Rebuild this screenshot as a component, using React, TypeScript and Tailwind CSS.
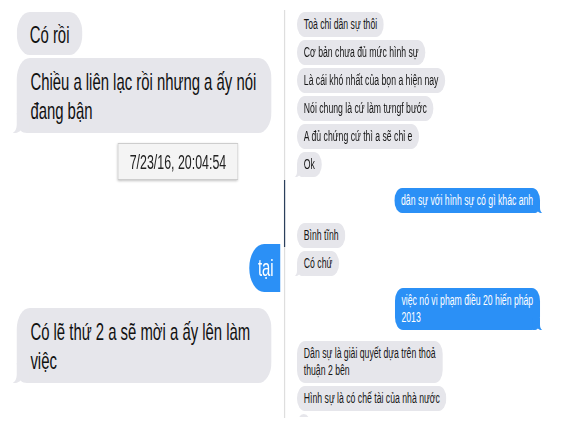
import React from 'react';

// the whole capture is squeezed horizontally, so the page is laid out wide and scaled on x
const Tail: React.FC<{ side: 'left' | 'right'; blue?: boolean; small?: boolean }> = ({ side, blue, small }) => {
  const pos = small
    ? side === 'left'
      ? 'left-[-4px] w-[16px] h-[12px]'
      : 'right-[-4px] w-[16px] h-[12px] -scale-x-100'
    : side === 'left'
      ? 'left-[-7px] w-[28px] h-[20px]'
      : 'right-[-7px] w-[28px] h-[20px] -scale-x-100';
  return (
    <svg
      viewBox="0 0 28 20"
      preserveAspectRatio="none"
      className={`absolute bottom-0 ${pos} ${blue ? 'fill-[#2b90f6]' : 'fill-[#e6e6eb]'}`}
    >
      <path d="M7 0 V12 C7 16 4 19 0 20 C5 20.5 10 19.5 13 17.5 C16 19.3 19 20 24 20 H28 V0 Z" />
    </svg>
  );
};

const Small: React.FC<{ children?: React.ReactNode; tail?: boolean; className?: string }> = ({ children, tail, className }) => (
  <div className={`relative w-fit shrink-0 rounded-[13px] bg-[#e6e6eb] px-[11px] py-[4px] text-[14px] leading-[17px] text-[#161616] ${className ?? ''}`}>
    {children}
    {tail && <Tail side="left" small />}
  </div>
);

const SmallBlue: React.FC<{ children: React.ReactNode; className?: string }> = ({ children, className }) => (
  <div className={`relative w-fit shrink-0 self-end rounded-[13px] bg-[#2b90f6] px-[11px] py-[4px] text-[14px] leading-[17px] text-white ${className ?? ''}`}>
    {children}
    <Tail side="right" blue small />
  </div>
);

export default function App() {
  return (
    <div className="w-[583px] h-[435px] overflow-hidden bg-white font-['Liberation_Sans',Arial,sans-serif]">
      <div className="flex w-[940px] h-[435px] origin-top-left scale-x-[0.62]">
        {/* zoomed part */}
        <div className="flex flex-col w-[452px] h-[435px] shrink-0 overflow-hidden pl-[27px] pt-[12px]">
          <div className="relative w-fit shrink-0 rounded-[21px] bg-[#e6e6eb] px-[21px] pt-[8px] pb-[6px] text-[24px] leading-[29px] text-[#111]">
            Có rồi
          </div>
          <div className="relative w-[411px] h-[75px] shrink-0 mt-[3px] rounded-[21px] bg-[#e6e6eb] pl-[22px] pt-[9px] text-[24px] leading-[29px] text-[#111]">
            Chiều a liên lạc rồi nhưng a ấy nói
            <br />
            đang bận
            <Tail side="left" />
          </div>
          <div className="mt-[10px] ml-[163px] w-[194px] h-[37px] shrink-0 flex items-center justify-center border border-[#cdcdcd] bg-[#f4f4f4] shadow-[0_1px_3px_rgba(0,0,0,0.25)] text-[20px] text-[#222]">
            7/23/16, 20:04:54
          </div>
          <div className="mt-[64px] ml-[375px] w-[90px] h-[48px] shrink-0 flex items-center rounded-[24px] bg-[#2b90f6] pl-[14px] text-[24px] text-white">
            tại
          </div>
          <div className="relative w-[411px] h-[75px] shrink-0 mt-[16px] rounded-[21px] bg-[#e6e6eb] pl-[22px] pt-[9px] text-[24px] leading-[29px] text-[#111]">
            Có lẽ thứ 2 a sẽ mời a ấy lên làm
            <br />
            việc
            <Tail side="left" />
          </div>
        </div>

        {/* divider */}
        <div className="flex flex-col w-[2px] shrink-0 ml-[6px] mt-[10px] h-[408px]">
          <div className="h-[170px] bg-[#dedede]" />
          <div className="h-[67px] bg-[#2b3f5c]" />
          <div className="h-[171px] bg-[#dedede]" />
        </div>

        {/* conversation */}
        <div className="flex flex-col flex-1 h-[417px] overflow-hidden pl-[19px] pr-[69px] pt-[12px]">
          <Small>Toà chỉ dân sự thôi</Small>
          <Small className="mt-[3px]">Cơ bản chưa đủ mức hình sự</Small>
          <Small className="mt-[3px]">Là cái khó nhất của bọn a hiện nay</Small>
          <Small className="mt-[3px]">Nói chung là cứ làm tưngf bước</Small>
          <Small className="mt-[3px]">A đủ chứng cứ thì a sẽ chỉ e</Small>
          <Small className="mt-[3px]" tail>Ok</Small>
          <SmallBlue className="mt-[11px]">dân sự với hình sự có gì khác anh</SmallBlue>
          <Small className="mt-[10px]">Bình tĩnh</Small>
          <Small className="mt-[3px]" tail>Có chứ</Small>
          <SmallBlue className="mt-[12px]">
            việc nó vi phạm điều 20 hiến pháp
            <br />
            2013
          </SmallBlue>
          <Small className="mt-[11px]">
            Dân sự là giải quyết dựa trên thoả
            <br />
            thuận 2 bên
          </Small>
          <Small className="mt-[3px]">Hình sự là có chế tài của nhà nước</Small>
          <Small className="mt-[3px] w-[56px] h-[25px]" />
        </div>
      </div>
    </div>
  );
}
